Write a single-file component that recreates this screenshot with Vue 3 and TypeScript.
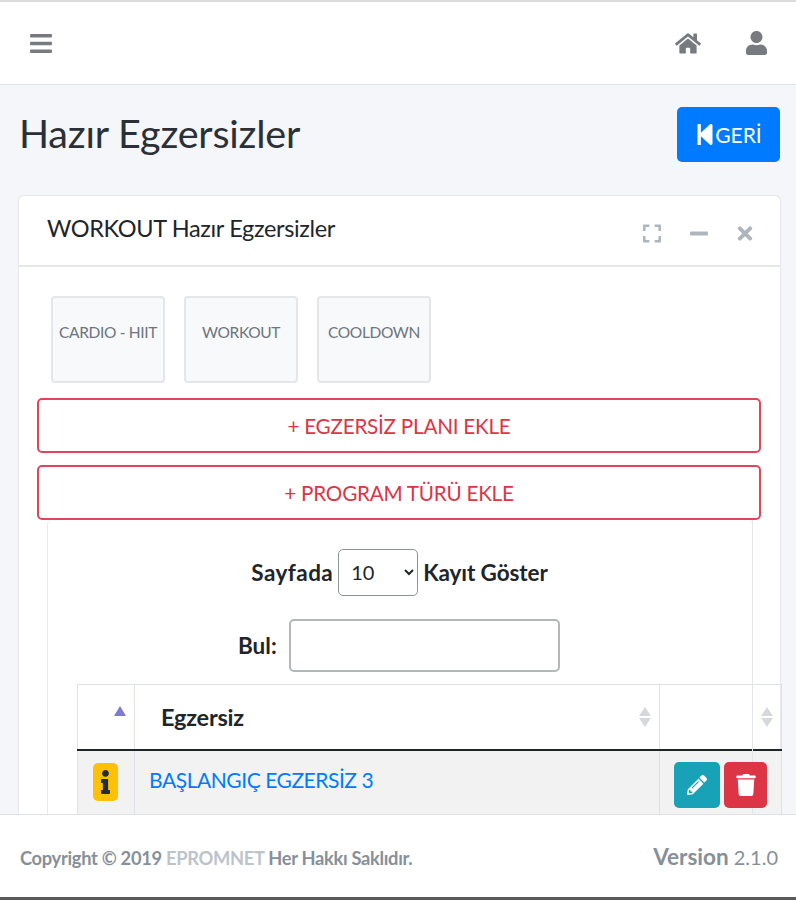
<script setup lang="ts">
const icons = {
  bars: 'M16 132h416c8.837 0 16-7.163 16-16V76c0-8.837-7.163-16-16-16H16C7.163 60 0 67.163 0 76v40c0 8.837 7.163 16 16 16zm0 160h416c8.837 0 16-7.163 16-16v-40c0-8.837-7.163-16-16-16H16c-8.837 0-16 7.163-16 16v40c0 8.837 7.163 16 16 16zm0 160h416c8.837 0 16-7.163 16-16v-40c0-8.837-7.163-16-16-16H16c-8.837 0-16 7.163-16 16v40c0 8.837 7.163 16 16 16z',
  home: 'M280.37 148.26L96 300.11V464a16 16 0 0 0 16 16l112.06-.29a16 16 0 0 0 15.92-16V368a16 16 0 0 1 16-16h64a16 16 0 0 1 16 16v95.64a16 16 0 0 0 16 16.05L464 480a16 16 0 0 0 16-16V300L295.67 148.26a12.19 12.19 0 0 0-15.3 0zM571.6 251.47L488 182.56V44.05a12 12 0 0 0-12-12h-56a12 12 0 0 0-12 12v72.61L318.47 43a48 48 0 0 0-61 0L4.34 251.47a12 12 0 0 0-1.6 16.9l25.5 31A12 12 0 0 0 45.15 301l235.22-193.74a12.19 12.19 0 0 1 15.3 0L530.9 301a12 12 0 0 0 16.9-1.6l25.5-31a12 12 0 0 0-1.7-16.93z',
  user: 'M224 256c70.7 0 128-57.3 128-128S294.7 0 224 0 96 57.3 96 128s57.3 128 128 128zm89.6 32h-16.7c-22.2 10.2-46.9 16-72.9 16s-50.6-5.8-72.9-16h-16.7C60.2 288 0 348.2 0 422.4V464c0 26.5 21.5 48 48 48h352c26.5 0 48-21.5 48-48v-41.6c0-74.2-60.2-134.4-134.4-134.4z',
  expand: 'M0 180V56c0-13.3 10.7-24 24-24h124c6.6 0 12 5.4 12 12v40c0 6.6-5.4 12-12 12H64v84c0 6.6-5.4 12-12 12H12c-6.6 0-12-5.4-12-12zM288 44v40c0 6.6 5.4 12 12 12h84v84c0 6.6 5.4 12 12 12h40c6.6 0 12-5.4 12-12V56c0-13.3-10.7-24-24-24H300c-6.6 0-12 5.4-12 12zm148 276h-40c-6.6 0-12 5.4-12 12v84h-84c-6.6 0-12 5.4-12 12v40c0 6.6 5.4 12 12 12h124c13.3 0 24-10.7 24-24V332c0-6.6-5.4-12-12-12zM160 468v-40c0-6.6-5.4-12-12-12H64v-84c0-6.6-5.4-12-12-12H12c-6.6 0-12 5.4-12 12v124c0 13.3 10.7 24 24 24h124c6.6 0 12-5.4 12-12z',
  minus: 'M416 208H32c-17.67 0-32 14.33-32 32v32c0 17.67 14.33 32 32 32h384c17.67 0 32-14.33 32-32v-32c0-17.67-14.33-32-32-32z',
  times: 'M242.72 256l100.07-100.07c12.28-12.28 12.28-32.19 0-44.48l-22.24-22.24c-12.28-12.28-32.19-12.28-44.48 0L176 189.28 75.93 89.21c-12.28-12.28-32.19-12.28-44.48 0L9.21 111.45c-12.28 12.28-12.28 32.19 0 44.48L109.28 256 9.21 356.07c-12.28 12.28-12.28 32.19 0 44.48l22.24 22.24c12.28 12.28 32.2 12.28 44.48 0L176 322.72l100.07 100.07c12.28 12.28 32.2 12.28 44.48 0l22.24-22.24c12.28-12.28 12.28-32.19 0-44.48L242.72 256z',
  back: 'M64 468V44c0-6.6 5.4-12 12-12h48c6.6 0 12 5.4 12 12v176.4l195.5-181C352.1 22.3 384 36.6 384 64v384c0 27.4-31.9 41.7-52.5 24.6L136 292.7V468c0 6.6-5.4 12-12 12H76c-6.6 0-12-5.4-12-12z',
  info: 'M20 424.229h20V279.771H20c-11.046 0-20-8.954-20-20V212c0-11.046 8.954-20 20-20h112c11.046 0 20 8.954 20 20v212.229h20c11.046 0 20 8.954 20 20V492c0 11.046-8.954 20-20 20H20c-11.046 0-20-8.954-20-20v-47.771c0-11.046 8.954-20 20-20zM96 0C56.235 0 24 32.235 24 72s32.235 72 72 72 72-32.235 72-72S135.764 0 96 0z',
  pencil: 'M497.9 142.1l-46.1 46.1c-4.7 4.7-12.3 4.7-17 0l-111-111c-4.7-4.7-4.7-12.3 0-17l46.1-46.1c18.7-18.7 49.1-18.7 67.9 0l60.1 60.1c18.8 18.7 18.8 49.1 0 67.9zM284.2 99.8L21.6 362.4.4 483.9c-2.9 16.4 11.4 30.6 27.8 27.8l121.5-21.3 262.6-262.6c4.7-4.7 4.7-12.3 0-17l-111-111c-4.8-4.7-12.4-4.7-17.1 0zM124.1 339.9c-5.5-5.5-5.5-14.3 0-19.8l154-154c5.5-5.5 14.3-5.5 19.8 0s5.5 14.3 0 19.8l-154 154c-5.5 5.5-14.3 5.5-19.8 0zM88 424h48v36.3l-64.5 11.3-31.1-31.1L51.7 376H88v48z',
  trash: 'M432 32H312l-9.4-18.7A24 24 0 0 0 281.1 0H166.8a23.72 23.72 0 0 0-21.4 13.3L136 32H16A16 16 0 0 0 0 48v32a16 16 0 0 0 16 16h416a16 16 0 0 0 16-16V48a16 16 0 0 0-16-16zM53.2 467a48 48 0 0 0 47.9 45h245.8a48 48 0 0 0 47.9-45L416 128H32z',
}

const tiles = ['CARDIO - HIIT', 'WORKOUT', 'COOLDOWN']
const addButtons = ['+ EGZERSİZ PLANI EKLE', '+ PROGRAM TÜRÜ EKLE']
</script>

<template>
  <div class="page">
    <nav class="navbar">
      <svg class="nav-bars" viewBox="0 0 448 512"><path :d="icons.bars" /></svg>
      <div class="nav-right">
        <svg class="nav-home" viewBox="0 0 576 512"><path :d="icons.home" /></svg>
        <svg class="nav-user" viewBox="0 0 448 512"><path :d="icons.user" /></svg>
      </div>
    </nav>

    <main class="content">
      <header class="head">
        <h1>Hazır Egzersizler</h1>
        <a class="back-btn">
          <svg viewBox="64 32 320 448"><path :d="icons.back" /></svg>
          <span>GERİ</span>
        </a>
      </header>

      <section class="card">
        <div class="card-header">
          <h3>WORKOUT Hazır Egzersizler</h3>
          <div class="tools">
            <svg class="tool-expand" viewBox="0 0 448 512"><path :d="icons.expand" /></svg>
            <svg class="tool-minus" viewBox="0 0 448 512"><path :d="icons.minus" /></svg>
            <svg class="tool-times" viewBox="0 0 352 512"><path :d="icons.times" /></svg>
          </div>
        </div>

        <div class="card-body">
          <div class="tiles">
            <a v-for="t in tiles" :key="t" class="tile">{{ t }}</a>
          </div>
          <div class="add-list">
            <a v-for="b in addButtons" :key="b" class="add-btn">{{ b }}</a>
          </div>

          <div class="table-box">
            <div class="length-row">
              <label class="per-page">Sayfada</label>
              <select class="length-select">
                <option>10</option>
                <option>25</option>
                <option>50</option>
              </select>
              <label>Kayıt Göster</label>
            </div>
            <div class="search-row">
              <label>Bul:</label>
              <input class="search-input" type="text" />
            </div>

            <table class="grid">
              <thead>
                <tr>
                  <th class="col-info"><span class="sort-up"></span></th>
                  <th class="col-name">
                    Egzersiz
                    <span class="sort-both"></span>
                  </th>
                  <th class="col-act"><span class="sort-both"></span></th>
                </tr>
              </thead>
              <tbody>
                <tr>
                  <td class="col-info">
                    <span class="info-badge">
                      <svg viewBox="0 0 192 512"><path :d="icons.info" /></svg>
                    </span>
                  </td>
                  <td class="cell-name"><a class="row-link">BAŞLANGIÇ EGZERSİZ 3</a></td>
                  <td class="cell-act">
                    <a class="act-btn edit">
                      <svg viewBox="0 0 512 512"><path :d="icons.pencil" /></svg>
                    </a>
                    <a class="act-btn del">
                      <svg viewBox="0 0 448 512"><path :d="icons.trash" /></svg>
                    </a>
                  </td>
                </tr>
              </tbody>
            </table>
          </div>
        </div>
      </section>
    </main>

    <footer class="footer">
      <strong class="copy">Copyright © 2019 <span class="brand">EPROMNET</span> Her Hakkı Saklıdır.</strong>
      <span class="version"><b>Version</b> 2.1.0</span>
    </footer>
  </div>
</template>

<style>
html,
body {
  margin: 0;
  overflow: hidden;
}
</style>

<style scoped>
* {
  box-sizing: border-box;
}

.page {
  display: flex;
  flex-direction: column;
  height: 900px;
  overflow: hidden;
  border-top: 2px solid #dcdcdf;
  border-bottom: 3px solid #5a5a5e;
  background: #f4f6f9;
  color: #212529;
  font-family: Lato, "Liberation Sans", sans-serif;
}

.navbar {
  display: flex;
  flex: none;
  align-items: center;
  justify-content: space-between;
  height: 83px;
  padding: 0 29px 0 30px;
  border-bottom: 1px solid #dee2e6;
  background: #fff;
}

.navbar svg {
  display: block;
  fill: #777b80;
}

.nav-bars {
  width: 22px;
  height: 25px;
}

.nav-right {
  display: flex;
  align-items: center;
  gap: 45px;
}

.nav-home {
  width: 26px;
  height: 23px;
}

.nav-user {
  width: 21px;
  height: 24px;
}

.content {
  flex: 1;
  min-height: 0;
  overflow: hidden;
  padding: 22px 16px 0 19px;
}

.head {
  display: flex;
  align-items: flex-start;
  justify-content: space-between;
  margin-bottom: 34px;
}

h1 {
  margin: 0;
  font-size: 39.5px;
  font-weight: 400;
  line-height: 52px;
  letter-spacing: -0.2px;
  color: #2b3036;
}

.back-btn {
  display: flex;
  align-items: center;
  justify-content: center;
  gap: 2px;
  width: 103px;
  height: 55px;
  padding-left: 2px;
  border-radius: 5px;
  background: #007bff;
  color: #fff;
  font-size: 21px;
}

.back-btn svg {
  width: 16px;
  height: 21px;
  fill: #fff;
}

.card {
  border-radius: 5px;
  background: #fff;
  box-shadow: 0 0 2px rgba(0, 0, 0, 0.2);
}

.card-header {
  display: flex;
  align-items: center;
  justify-content: space-between;
  height: 71px;
  padding: 0 27px 0 28px;
  border-bottom: 2px solid #e4e6e9;
}

h3 {
  margin: 0 0 6px;
  font-size: 23.5px;
  font-weight: 400;
  letter-spacing: -0.35px;
  color: #212529;
}

.tools {
  display: flex;
  align-items: center;
  gap: 29px;
  margin-top: 6px;
}

.tools svg {
  display: block;
  fill: #adb5bd;
}

.tool-expand {
  width: 18px;
  height: 21px;
}

.tool-minus {
  width: 18px;
  height: 21px;
}

.tool-times {
  width: 16px;
  height: 21px;
}

.card-body {
  padding: 29px 18px 0;
}

.tiles {
  display: flex;
  gap: 19px;
  padding-left: 14px;
}

.tile {
  width: 114px;
  height: 87px;
  padding-top: 23px;
  border: 2px solid #e4e6e9;
  border-radius: 4px;
  background: #f8f9fa;
  color: #6c757d;
  font-size: 15.5px;
  letter-spacing: -0.35px;
  line-height: 22px;
  text-align: center;
}

.add-list {
  display: flex;
  flex-direction: column;
  gap: 12px;
  margin-top: 15px;
}

.add-btn {
  display: block;
  width: 724px;
  height: 55px;
  border: 2px solid #e2445a;
  border-radius: 5px;
  color: #dc3545;
  font-size: 20.7px;
  letter-spacing: -0.25px;
  line-height: 52px;
  text-align: center;
}

.table-box {
  position: relative;
  width: 706px;
  height: 300px;
  margin-left: 10px;
  padding: 28px 0 0 29px;
  border: 1px solid #e6e8eb;
  border-top: 0;
  border-radius: 5px 5px 0 0;
}

.table-box::after {
  content: "";
  position: absolute;
  top: 0;
  right: -1px;
  bottom: 0;
  width: 1px;
  background: #e2e4e8;
}

.length-row {
  display: flex;
  align-items: center;
  justify-content: center;
  gap: 5px;
  height: 48px;
  padding-right: 30px;
  font-size: 22.5px;
  font-weight: 700;
  letter-spacing: -0.1px;
}

.per-page {
  letter-spacing: 0.45px;
}

.length-select {
  width: 80px;
  height: 47px;
  padding-left: 8px;
  border: 1px solid #8f9499;
  border-radius: 5px;
  background: #fff;
  color: #212529;
  font-family: Lato, "Liberation Sans", sans-serif;
  font-size: 20px;
}

.search-row {
  display: flex;
  align-items: center;
  gap: 12px;
  margin-top: 23px;
  padding-left: 161px;
  font-size: 22.5px;
  font-weight: 700;
}

.search-input {
  width: 271px;
  height: 53px;
  border: 2px solid #b4b7ba;
  border-radius: 5px;
  background: #fff;
}

.grid {
  width: 705px;
  margin-top: 12px;
  border-collapse: collapse;
  table-layout: fixed;
  font-size: 23.5px;
}

.grid th {
  position: relative;
  height: 65px;
  border: 1px solid #dee2e6;
  border-bottom: 2px solid #212529;
  text-align: left;
  font-weight: 700;
}

.grid td {
  height: 70px;
  border: 1px solid #dee2e6;
  background: #f2f2f2;
}

.col-info {
  width: 57px;
}

.col-act {
  width: 122px;
}

.col-name {
  padding-left: 26px;
  letter-spacing: -0.2px;
}

.sort-up {
  position: absolute;
  top: 21px;
  right: 8px;
  border: 6px solid transparent;
  border-top: 0;
  border-bottom: 10px solid #7c7cd6;
}

.sort-both {
  position: absolute;
  top: 22px;
  right: 8px;
  width: 12px;
  height: 20px;
}

.sort-both::before,
.sort-both::after {
  content: "";
  position: absolute;
  left: 0;
  border: 6px solid transparent;
}

.sort-both::before {
  top: 0;
  border-top: 0;
  border-bottom: 9px solid #d6d8db;
}

.sort-both::after {
  bottom: 0;
  border-bottom: 0;
  border-top: 9px solid #d6d8db;
}

.grid td.col-info {
  padding: 0 0 0 15px;
}

.info-badge {
  display: flex;
  align-items: center;
  justify-content: center;
  width: 25px;
  height: 38px;
  margin-top: -6px;
  border-radius: 5px;
  background: #ffc107;
}

.info-badge svg {
  width: 11px;
  height: 24px;
  fill: #1f2d3d;
}

.cell-name {
  padding: 0 0 12px 14px;
}

.row-link {
  color: #007bff;
  font-size: 21px;
  letter-spacing: -0.45px;
}

.cell-act {
  padding: 0 0 0 14px;
  vertical-align: top;
}

.act-btn {
  position: relative;
  z-index: 1;
  display: inline-flex;
  align-items: center;
  justify-content: center;
  height: 46px;
  margin-top: 11px;
  border-radius: 5px;
  vertical-align: top;
}

.act-btn svg {
  width: 20px;
  height: 22px;
  fill: #fff;
}

.edit {
  width: 46px;
  background: #17a2b8;
}

.del {
  width: 43px;
  margin-left: 4px;
  background: #dc3545;
}

.footer {
  display: flex;
  flex: none;
  align-items: center;
  justify-content: space-between;
  height: 83px;
  padding: 0 18px 0 20px;
  border-top: 1px solid #dee2e6;
  background: #fff;
  color: #869099;
}

.copy {
  margin-top: 4px;
  font-size: 18.3px;
  letter-spacing: -0.3px;
}

.brand {
  color: #bcc3cb;
}

.version {
  font-size: 20px;
}

.version b {
  font-size: 22.5px;
}
</style>
